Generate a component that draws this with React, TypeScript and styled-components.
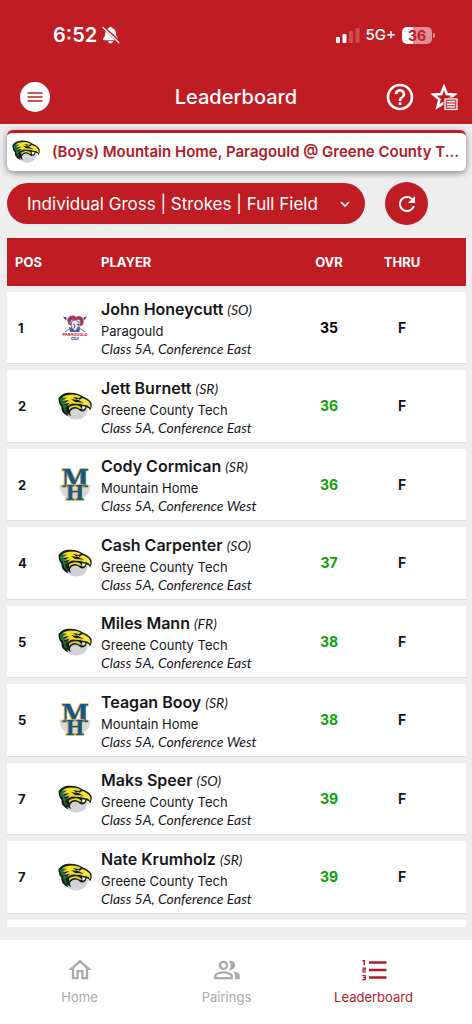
import React from "react";
import styled, { createGlobalStyle, css } from "styled-components";
import {
  MdHelpOutline,
  MdRefresh,
  MdOutlineHome,
  MdOutlinePeopleAlt,
} from "react-icons/md";

const red = "#bf1d23";

const GlobalStyle = createGlobalStyle`
  *, *::before, *::after { box-sizing: border-box; }
  body {
    margin: 0;
    background: #eeeeee;
    color: #17171a;
    font-family: Inter, "Liberation Sans", sans-serif;
  }
  button, select { font: inherit; color: inherit; }
`;

const Page = styled.div`
  display: flex;
  flex-direction: column;
  height: 100vh;
`;

const Header = styled.header`
  flex: none;
  background: ${red};
  color: #fff;
`;

const StatusBar = styled.div`
  display: flex;
  align-items: center;
  justify-content: space-between;
  height: 70px;
  padding: 0 37px 0 53px;
`;

const StatusGroup = styled.div<{ $gap: number }>`
  display: flex;
  align-items: center;
  gap: ${(p) => p.$gap}px;
`;

const Clock = styled.span`
  font-size: 20px;
  line-height: 24px;
  font-weight: 600;
`;

const Network = styled.span`
  font-size: 15px;
  line-height: 24px;
  font-weight: 500;
`;

const BatteryBody = styled.span`
  width: 30px;
  height: 17px;
  border-radius: 5px;
  background: linear-gradient(to right, #fff 36%, #e08f93 36%);
  color: ${red};
  font-size: 14px;
  line-height: 17px;
  font-weight: 700;
  text-align: center;
`;

const BatteryTip = styled.span`
  width: 2px;
  height: 5px;
  border-radius: 0 2px 2px 0;
  background: #e08f93;
`;

const AppBar = styled.div`
  display: grid;
  grid-template-columns: 1fr auto 1fr;
  align-items: center;
  height: 54px;
  padding: 0 14px;
`;

const Title = styled.h1`
  margin: 0;
  font-size: 20px;
  line-height: 28px;
  font-weight: 500;
`;

const IconButton = styled.button`
  display: flex;
  align-items: center;
  justify-content: center;
  padding: 0;
  border: 0;
  background: none;
  cursor: pointer;
`;

const MenuButton = styled(IconButton)`
  width: 30px;
  height: 30px;
  margin-left: 6px;
  border-radius: 50%;
  background: #fff;
  color: ${red};
`;

const Actions = styled.div`
  display: flex;
  justify-content: flex-end;
  align-items: center;
  gap: 14px;
`;

const Main = styled.main`
  flex: 1;
  min-height: 0;
  display: flex;
  flex-direction: column;
  padding: 6px 6px 13px 7px;
`;

const EventCard = styled.section`
  flex: none;
  display: flex;
  align-items: center;
  gap: 12px;
  height: 41px;
  padding: 0 8px 0 5px;
  border-top: 3px solid ${red};
  border-radius: 6px;
  background: #fff;
  box-shadow: 0 2px 7px rgba(0, 0, 0, 0.45);

  > svg { flex: none; }
`;

const EventName = styled.h2`
  margin: 0;
  color: #b31b26;
  font-size: 15px;
  line-height: 20px;
  font-weight: 600;
  white-space: nowrap;
`;

const Filters = styled.div`
  flex: none;
  display: flex;
  align-items: center;
  gap: 20px;
  padding: 11px 38px 13px 0;
`;

const SelectWrap = styled.label`
  flex: 1;
  display: grid;
  align-items: center;
  border-radius: 21px;
  background: ${red};
  color: #fff;

  > * { grid-area: 1 / 1; }
  > svg { justify-self: end; margin-right: 14px; pointer-events: none; }
`;

const Select = styled.select`
  appearance: none;
  width: 100%;
  height: 41px;
  padding: 0 36px 0 20px;
  border: 0;
  border-radius: 21px;
  background: transparent;
  font-size: 17px;
  line-height: 24px;
  font-weight: 400;

  option { color: #17171a; }
`;

const RefreshButton = styled(IconButton)`
  width: 43px;
  height: 43px;
  border-radius: 50%;
  background: ${red};
  color: #fff;
`;

const Scroller = styled.div`
  flex: 1;
  min-height: 0;
  overflow: hidden;
`;

const Table = styled.table`
  width: 100%;
  table-layout: fixed;
  border-collapse: separate;
  border-spacing: 0 6px;
  margin-top: -6px;
`;

const HeadCell = styled.th<{ $align?: string; $width?: number }>`
  ${(p) => p.$width && css`width: ${p.$width}px;`}
  height: 48px;
  padding: 0;
  background: ${red};
  color: #fff;
  font-size: 13px;
  line-height: 18px;
  font-weight: 700;
  text-align: ${(p) => p.$align ?? "center"};

  &:first-child { padding-left: 8px; }
`;

const Row = styled.tr`
  height: 72px;
  &:nth-child(even) { height: 73px; }
`;

const Cell = styled.td`
  padding: 0;
  background: #fff;
  border-bottom: 1px solid #dedede;
`;

const Position = styled(Cell)`
  padding-left: 11px;
  font-size: 13px;
  line-height: 18px;
  font-weight: 700;
`;

const Score = styled(Cell)<{ $color?: string }>`
  color: ${(p) => p.$color ?? "#17171a"};
  font-size: 14px;
  line-height: 20px;
  font-weight: 700;
  text-align: center;
`;

const LogoCell = styled(Cell)`
  > svg { display: block; }
`;

const PlayerName = styled.div`
  font-size: 16px;
  line-height: 22px;
  font-weight: 600;
  white-space: nowrap;
`;

const Italic = styled.span`
  font-family: Lato, "Open Sans", sans-serif;
  font-size: 14px;
  font-style: italic;
  font-weight: 400;
`;

const School = styled.div`
  font-size: 13px;
  line-height: 20px;
  white-space: nowrap;
`;

const Division = styled(Italic)`
  display: block;
  line-height: 16px;
  white-space: nowrap;
`;

const TabBar = styled.nav`
  flex: none;
  display: flex;
  height: 84px;
  padding: 16px 25px 0 6px;
  background: #fff;
`;

const Tab = styled.a<{ $active?: boolean }>`
  flex: 1;
  display: flex;
  flex-direction: column;
  align-items: center;
  gap: 3px;
  color: ${(p) => (p.$active ? "#b31b26" : "#aaaaaa")};
  font-size: 13px;
  line-height: 20px;
  text-decoration: none;
`;

const BellOff = () => (
  <svg width="18" height="18" viewBox="0 0 18 18" aria-hidden="true">
    <path d="M8.500 .8C9.700 .8 10.200 1.600 10.600 2.200C13.200 3 13.900 5.500 14 8C14.100 10.500 16.200 11.500 16.200 13.200C16.200 13.800 15.800 14.200 15.200 14.200H1.900C1 14.200 .7 13.200 1.100 12.600C2 11.400 3 10.400 3.100 8C3.200 5.500 3.900 3 6.500 2.200C6.900 1.600 7.500 .8 8.500 .8ZM6 15H11C10.800 16.500 9.800 17.300 8.500 17.300S6.200 16.500 6 15Z" fill="#fff" />
    <path d="M1.200 1L17 15.600" stroke={red} strokeWidth="3" />
    <path d="M1 1.600L16.800 16.400" stroke="#fff" strokeWidth="1.400" strokeLinecap="round" />
  </svg>
);

const Signal = () => (
  <svg width="24" height="16" viewBox="0 0 24 16" fill="#fff" aria-hidden="true">
    <rect x="0" y="10" width="4" height="6" rx="1.200" />
    <rect x="6.500" y="7" width="4" height="9" rx="1.200" />
    <rect x="13" y="4" width="4" height="12" rx="1.200" opacity=".22" />
    <rect x="19.500" y="1" width="4" height="15" rx="1.200" opacity=".22" />
  </svg>
);

const MenuIcon = () => (
  <svg width="16" height="12" viewBox="0 0 16 12" stroke="currentColor" strokeWidth="1.700" aria-hidden="true">
    <path d="M.5 2H15.500M.5 6H15.500M.5 10H15.500" />
  </svg>
);

const StarNote = () => (
  <svg width="28" height="28" viewBox="0 0 28 28" fill="none" aria-hidden="true">
    <path d="M14 4L16.800 11L24.500 11.600L18.600 16.500L20.500 23.900L14 19.800L7.500 23.900L9.400 16.500L3.500 11.600L11.200 11Z" stroke="#fff" strokeWidth="2.600" />
    <rect x="13.500" y="14.500" width="14" height="13" fill={red} />
    <rect x="15" y="16" width="12" height="10.500" stroke="#fff" strokeWidth="1.200" fill="#cc4b50" />
    <path d="M17 18.700H25M17 21.300H25M17 23.900H25" stroke="#fff" strokeWidth="1.200" />
  </svg>
);

const Chevron = () => (
  <svg width="12" height="8" viewBox="0 0 12 8" fill="none" stroke="currentColor" strokeWidth="1.700" aria-hidden="true">
    <path d="M2 2L6 6L10 2" />
  </svg>
);

const RankList = () => (
  <svg width="28" height="28" viewBox="0 0 28 28" fill="none" stroke="currentColor" aria-hidden="true">
    <path d="M9 6.500H26.500M9 14H26.500M9 21.500H26.500" strokeWidth="2.600" />
    <path d="M2.500 4.700H4.300V9" strokeWidth="1.500" />
    <path d="M2.300 12.200H5.300V13.800H3V15.800H6" strokeWidth="1.200" />
    <path d="M2.300 19.700H5.300V23.600H2.300M3 21.650H5.300" strokeWidth="1.200" />
  </svg>
);

const EagleLogo = ({ size = 34 }: { size?: number }) => (
  <svg width={size} height={(size * 28) / 34} viewBox="0 0 34 28" role="img" aria-label="Greene County Tech">
    <path d="M6 15C7 23 11 27.500 18 27.500C25 27.500 29 23.500 30 17L21 13Z" fill="#d3d3d6" />
    <path d="M.5 6C3 3 6 1 10 .8C16 .3 21 1.500 25 4.500C29 6 32 8 33.500 11C34 13.500 33.500 16.500 32 18.500C31.500 16.500 30.500 15.500 28.500 15.500C28 18 26.500 19.500 24 19.500C21.500 19 20.500 17 18 16.500C15 16.500 12.500 18 12 20.500C12 22 12.500 23 13.500 24C11.500 23.500 10.500 22.500 9.500 21.500C9.500 22.800 9.800 23.500 10.500 24.500C5 22 3 18.500 3.500 15C1.500 13 .3 9.500 .5 6Z" fill="#151d17" />
    <path d="M2 7C5 4.500 9 3 14 3.500L7 6.500L12 6.500L5 10L10 10L5.500 13L10 13.500L7 16L9 18.500C5.500 17 4.800 15 5 13.500C3 12 2 9.500 2 7Z" fill="#26703a" />
    <path d="M4 5.500C8 2 17 1 23 4.800L21 6L15 5L19 8L13 7L17 10L25 10.500L22 12L14 11.500L9 14L12 10.500L6.500 12L11 8L4.500 9L9 5.500Z" fill="#f1de25" />
    <path d="M24 6C29 7.500 32.500 10 32.500 14L32 16C31 14 29 13 26 13L22 12L25.500 10.500L21 8.500Z" fill="#f5e336" />
    <path d="M11 15.500C14 13 19 12.500 22 14.500L24 17L21 16.500C18 14 14 14.500 11 18Z" fill="#e8d628" />
    <path d="M18 7L22 8.500L20.500 6.800Z" fill="#fff" />
    <path d="M24 14.200L27.500 14.800C27 16.500 26 17.500 24.500 17.800Z" fill="#fff" />
    <path d="M5.500 16L8.500 19L9.500 21C7 20.500 5.500 18 5.500 16Z" fill="#26703a" />
  </svg>
);

const monogram = {
  fontFamily: '"DejaVu Serif", serif',
  fontWeight: 700,
  textAnchor: "middle" as const,
  fill: "#155a86",
  stroke: "#d9b04c",
  strokeWidth: 1.4,
  paintOrder: "stroke" as const,
};

const MountainLogo = () => (
  <svg width="34" height="34" viewBox="0 0 34 34" overflow="visible" role="img" aria-label="Mountain Home">
    <path d="M1.500 17A15.500 15.500 0 0 0 32.500 17Z" fill="#d9d9db" />
    <text x="17" y="19" fontSize="25" {...monogram}>M</text>
    <text x="17" y="32" fontSize="20" {...monogram}>H</text>
  </svg>
);

const RamLogo = () => (
  <svg width="34" height="34" viewBox="0 0 34 34" role="img" aria-label="Paragould">
    <path d="M7 7L27 21M27 7L7 21" stroke="#6471a4" strokeWidth="1" />
    <path d="M5 5.500L8.500 6.500L7.500 9ZM29 5.500L25.500 6.500L26.500 9Z" fill="#27347c" />
    <path d="M9.500 10C9 5 15 3 18 6C22 3 27 7 25.500 12C25 15 22 16 20.500 14C23.500 13 23 8 19.500 9L15.500 9C12 9 11.500 12 14 14C11 15 9.500 13 9.500 10Z" fill="#d0384d" />
    <path d="M11 11C11 6 16 5 18 7.500M19.500 7C23 6 25 10 23 13" fill="none" stroke="#3a4a97" strokeWidth="1.200" />
    <path d="M14 10L17 9L21 11L20 16L18 20L15 20L13 15Z" fill="#eceef6" stroke="#46549a" strokeWidth=".800" />
    <path d="M11 16L15.500 18L17 20L22 15L21.500 21H12Z" fill="#4858a1" />
    <path d="M15 13L17 14M19 14L20 13M17 14L16 17.500" stroke="#ce3347" strokeWidth="1" />
    <text x="17" y="25" fontSize="4" fontWeight="800" textAnchor="middle" fill="#cf2f43">PARAGOULD</text>
    <text x="17" y="29" fontSize="3" fontWeight="800" textAnchor="middle" fill="#27347c">GOLF</text>
  </svg>
);

type Team = "Paragould" | "Greene County Tech" | "Mountain Home";

const teams: Record<Team, { logo: React.ReactNode; conference: string }> = {
  Paragould: { logo: <RamLogo />, conference: "East" },
  "Greene County Tech": { logo: <EagleLogo />, conference: "East" },
  "Mountain Home": { logo: <MountainLogo />, conference: "West" },
};

const players: { pos: number; name: string; year: string; team: Team; score: number }[] = [
  { pos: 1, name: "John Honeycutt", year: "SO", team: "Paragould", score: 35 },
  { pos: 2, name: "Jett Burnett", year: "SR", team: "Greene County Tech", score: 36 },
  { pos: 2, name: "Cody Cormican", year: "SR", team: "Mountain Home", score: 36 },
  { pos: 4, name: "Cash Carpenter", year: "SO", team: "Greene County Tech", score: 37 },
  { pos: 5, name: "Miles Mann", year: "FR", team: "Greene County Tech", score: 38 },
  { pos: 5, name: "Teagan Booy", year: "SR", team: "Mountain Home", score: 38 },
  { pos: 7, name: "Maks Speer", year: "SO", team: "Greene County Tech", score: 39 },
  { pos: 7, name: "Nate Krumholz", year: "SR", team: "Greene County Tech", score: 39 },
];

export default function App() {
  return (
    <Page>
      <GlobalStyle />
      <Header>
        <StatusBar>
          <StatusGroup $gap={5}>
            <Clock>6:52</Clock>
            <BellOff />
          </StatusGroup>
          <StatusGroup $gap={6}>
            <Signal />
            <Network>5G+</Network>
            <StatusGroup $gap={1}>
              <BatteryBody>36</BatteryBody>
              <BatteryTip />
            </StatusGroup>
          </StatusGroup>
        </StatusBar>
        <AppBar>
          <MenuButton aria-label="Menu"><MenuIcon /></MenuButton>
          <Title>Leaderboard</Title>
          <Actions>
            <IconButton aria-label="Help"><MdHelpOutline size={32} /></IconButton>
            <IconButton aria-label="Favorites"><StarNote /></IconButton>
          </Actions>
        </AppBar>
      </Header>
      <Main>
        <EventCard>
          <EagleLogo size={28} />
          <EventName>(Boys) Mountain Home, Paragould @ Greene County T...</EventName>
        </EventCard>
        <Filters>
          <SelectWrap>
            <Select aria-label="Leaderboard view">
              <option>Individual Gross | Strokes | Full Field</option>
            </Select>
            <Chevron />
          </SelectWrap>
          <RefreshButton aria-label="Refresh"><MdRefresh size={24} /></RefreshButton>
        </Filters>
        <Scroller>
          <Table>
            <thead>
              <tr>
                <HeadCell $align="left" $width={51}>POS</HeadCell>
                <HeadCell $width={43} aria-label="Team" />
                <HeadCell $align="left">PLAYER</HeadCell>
                <HeadCell $width={74}>OVR</HeadCell>
                <HeadCell $width={72}>THRU</HeadCell>
                <HeadCell $width={28} aria-hidden="true" />
              </tr>
            </thead>
            <tbody>
              {players.map((p) => (
                <Row key={p.name}>
                  <Position>{p.pos}</Position>
                  <LogoCell>{teams[p.team].logo}</LogoCell>
                  <Cell>
                    <PlayerName>
                      {p.name} <Italic>({p.year})</Italic>
                    </PlayerName>
                    <School>{p.team}</School>
                    <Division>Class 5A, Conference {teams[p.team].conference}</Division>
                  </Cell>
                  <Score $color={p.score < 36 ? "#000000" : "#0da10d"}>{p.score}</Score>
                  <Score>F</Score>
                  <Cell />
                </Row>
              ))}
              <Row aria-hidden="true">
                <Cell colSpan={6} />
              </Row>
            </tbody>
          </Table>
        </Scroller>
      </Main>
      <TabBar>
        <Tab href="#home"><MdOutlineHome size={28} />Home</Tab>
        <Tab href="#pairings"><MdOutlinePeopleAlt size={28} />Pairings</Tab>
        <Tab href="#leaderboard" $active aria-current="page"><RankList />Leaderboard</Tab>
      </TabBar>
    </Page>
  );
}
